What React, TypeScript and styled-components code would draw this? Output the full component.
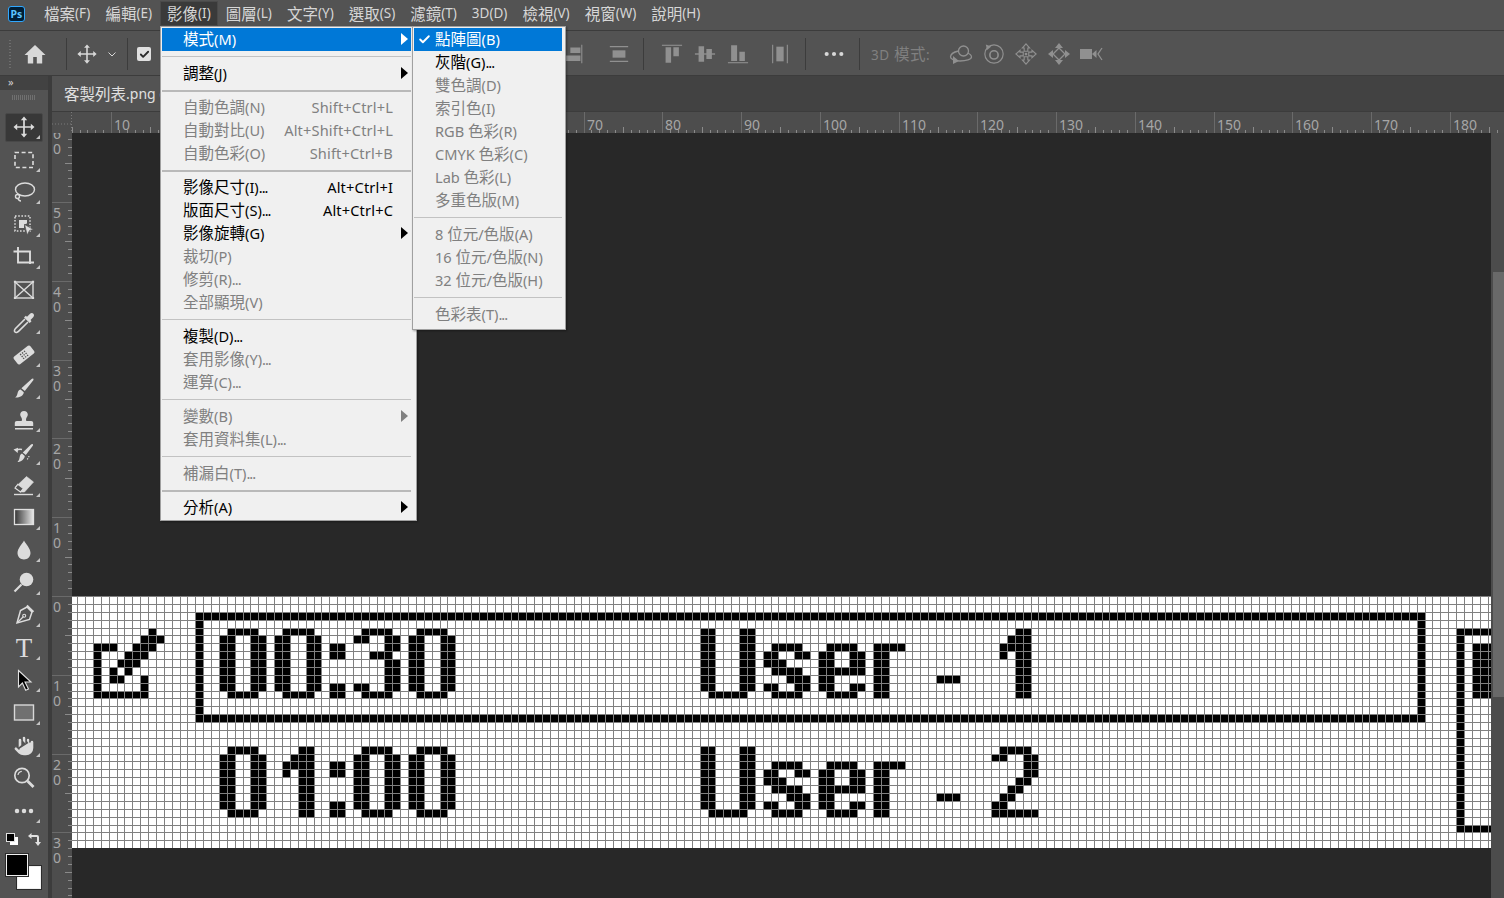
import React from 'react'
import styled, { createGlobalStyle } from 'styled-components'
import { Check, Hand } from 'lucide-react'

const GlobalStyle = createGlobalStyle`
  html, body {
    margin: 0;
    height: 100%;
    overflow: hidden;
    background: #535353;
  }
`

const Shell = styled.div`
  position: relative;
  display: flex;
  flex-direction: column;
  width: 1504px;
  height: 898px;
  overflow: hidden;
  background: #535353;
  font-family: 'Noto Sans', 'Noto Sans CJK TC', sans-serif;
  font-size: 14px;
  line-height: 1;
`

const Han = styled.span`
  font-family: 'Noto Sans CJK TC', sans-serif;
  font-size: 15.5px;
`

const Dots = styled.span`
  letter-spacing: -1px;
`

const Label: React.FC<{ text: string }> = ({ text }) => (
  <>
    {text.split(/([\u3400-\u9fff]+|\.\.\.)/).map((part, i) => {
      if (i % 2 === 0) return part
      return part === '...' ? <Dots key={i}>{part}</Dots> : <Han key={i}>{part}</Han>
    })}
  </>
)

/* ---------- menu bar ---------- */

const MenuBar = styled.div`
  flex: none;
  display: flex;
  align-items: center;
  height: 30px;
  padding-left: 8px;
  color: #d6d6d6;
  font-size: 13.5px;
`

const PsLogo = styled.div`
  flex: none;
  display: flex;
  align-items: center;
  justify-content: center;
  box-sizing: border-box;
  width: 17px;
  height: 16px;
  margin-right: 11.5px;
  margin-top: -2px;
  border: 1px solid #31a8ff;
  border-radius: 3px;
  background: #001e36;
  color: #5cc4ff;
  font-size: 10.5px;
  font-weight: 700;
`

const MenuTitle = styled.div<{ $active?: boolean }>`
  display: flex;
  align-items: center;
  height: 23px;
  margin-top: -3px;
  padding: 0 6.5px;
  border: 1px solid ${({ $active }) => ($active ? '#4a4a4a' : 'transparent')};
  background: ${({ $active }) => ($active ? '#3a3a3a' : 'transparent')};
  white-space: nowrap;
`

const MENU_TITLES = [
  '檔案(F)',
  '編輯(E)',
  '影像(I)',
  '圖層(L)',
  '文字(Y)',
  '選取(S)',
  '濾鏡(T)',
  '3D(D)',
  '檢視(V)',
  '視窗(W)',
  '說明(H)',
]

/* ---------- dropdown menus ---------- */

const Dropdown = styled.div<{ $left: number; $width: number; $pad: number; $padBottom: number }>`
  position: absolute;
  top: 26px;
  left: ${({ $left }) => $left}px;
  width: ${({ $width }) => $width}px;
  box-sizing: border-box;
  padding: 1px ${({ $pad }) => $pad}px ${({ $padBottom }) => $padBottom}px 1px;
  border: 1px solid #a0a0a0;
  background: #f0f0f0;
  box-shadow: 1px 1px 2px rgba(0, 0, 0, 0.35);
  z-index: 5;
`

const ItemRow = styled.div<{ $tone: 'on' | 'off' | 'hot' }>`
  display: grid;
  grid-template-columns: 21px 1fr auto 18px;
  align-items: center;
  box-sizing: border-box;
  height: 23px;
  padding-bottom: 1px;
  font-size: 14.6px;
  background: ${({ $tone }) => ($tone === 'hot' ? '#0078d7' : 'transparent')};
  color: ${({ $tone }) =>
    $tone === 'hot' ? '#fff' : $tone === 'on' ? '#000' : '#808080'};
  white-space: nowrap;
`

const CheckCell = styled.span`
  display: flex;
  justify-content: center;
`

const Shortcut = styled.span`
  font-size: 14.6px;
  letter-spacing: 0.15px;
`

const SubArrow = styled.span`
  justify-self: end;
  width: 0;
  height: 0;
  margin-right: 3px;
  border-left: 7px solid currentColor;
  border-top: 6px solid transparent;
  border-bottom: 6px solid transparent;
`

const Rule = styled.div<{ $thick?: boolean }>`
  height: ${({ $thick }) => ($thick ? 2 : 1)}px;
  margin: 5px 0 ${({ $thick }) => ($thick ? 4 : 5)}px;
  background: ${({ $thick }) => ($thick ? '#b9b9b9' : '#c2c2c2')};
`

type Entry =
  | { rule: true; thick?: boolean }
  | {
      rule?: false
      text: string
      key?: string
      tone: 'on' | 'off' | 'hot'
      arrow?: boolean
      checked?: boolean
    }

const IMAGE_MENU: Entry[] = [
  { text: '模式(M)', tone: 'hot', arrow: true },
  { rule: true },
  { text: '調整(J)', tone: 'on', arrow: true },
  { rule: true, thick: true },
  { text: '自動色調(N)', key: 'Shift+Ctrl+L', tone: 'off' },
  { text: '自動對比(U)', key: 'Alt+Shift+Ctrl+L', tone: 'off' },
  { text: '自動色彩(O)', key: 'Shift+Ctrl+B', tone: 'off' },
  { rule: true, thick: true },
  { text: '影像尺寸(I)...', key: 'Alt+Ctrl+I', tone: 'on' },
  { text: '版面尺寸(S)...', key: 'Alt+Ctrl+C', tone: 'on' },
  { text: '影像旋轉(G)', tone: 'on', arrow: true },
  { text: '裁切(P)', tone: 'off' },
  { text: '修剪(R)...', tone: 'off' },
  { text: '全部顯現(V)', tone: 'off' },
  { rule: true },
  { text: '複製(D)...', tone: 'on' },
  { text: '套用影像(Y)...', tone: 'off' },
  { text: '運算(C)...', tone: 'off' },
  { rule: true },
  { text: '變數(B)', tone: 'off', arrow: true },
  { text: '套用資料集(L)...', tone: 'off' },
  { rule: true },
  { text: '補漏白(T)...', tone: 'off' },
  { rule: true, thick: true },
  { text: '分析(A)', tone: 'on', arrow: true },
]

const MODE_MENU: Entry[] = [
  { text: '點陣圖(B)', tone: 'hot', checked: true },
  { text: '灰階(G)...', tone: 'on' },
  { text: '雙色調(D)', tone: 'off' },
  { text: '索引色(I)', tone: 'off' },
  { text: 'RGB 色彩(R)', tone: 'off' },
  { text: 'CMYK 色彩(C)', tone: 'off' },
  { text: 'Lab 色彩(L)', tone: 'off' },
  { text: '多重色版(M)', tone: 'off' },
  { rule: true },
  { text: '8 位元/色版(A)', tone: 'off' },
  { text: '16 位元/色版(N)', tone: 'off' },
  { text: '32 位元/色版(H)', tone: 'off' },
  { rule: true },
  { text: '色彩表(T)...', tone: 'off' },
]

const MenuList: React.FC<{ entries: Entry[] }> = ({ entries }) => (
  <>
    {entries.map((e, i) =>
      e.rule ? (
        <Rule key={i} $thick={e.thick} />
      ) : (
        <ItemRow key={i} $tone={e.tone}>
          <CheckCell>
            {e.checked && <Check size={13} strokeWidth={3.5} />}
          </CheckCell>
          <span>
            <Label text={e.text} />
          </span>
          <Shortcut>{e.key}</Shortcut>
          {e.arrow ? <SubArrow /> : <span />}
        </ItemRow>
      ),
    )}
  </>
)

/* ---------- icons ---------- */

const Ic: React.FC<{ size?: number; children: React.ReactNode }> = ({
  size = 24,
  children,
}) => (
  <svg
    width={size}
    height={size}
    viewBox="0 0 24 24"
    fill="none"
    stroke="currentColor"
    strokeWidth={1.5}
  >
    {children}
  </svg>
)

const MoveGlyph = () => (
  <>
    <path d="M12 4v16M4 12h16" strokeWidth={1.7} />
    <path
      d="M12 1.5l3.2 3.7H8.8zM12 22.5l3.2-3.7H8.8zM1.5 12l3.7-3.2v6.4zM22.5 12l-3.7-3.2v6.4z"
      fill="currentColor"
      stroke="none"
    />
  </>
)

// no flyout marker under the frame and zoom tools
const NO_MARKER = [5, 20]

const TOOL_ICONS: React.ReactNode[] = [
  <MoveGlyph />,
  <rect x="3" y="4.5" width="18" height="15" strokeDasharray="4 2.6" strokeWidth={1.6} />,
  <>
    <ellipse cx="13" cy="9.5" rx="9.5" ry="6.5" strokeWidth={1.4} />
    <circle cx="5.5" cy="16.5" r="2" strokeWidth={1.4} />
    <path d="M6 18.5c.5 1.5 2 2.5 3 2.5" strokeWidth={1.4} />
  </>,
  <>
    <rect x="3" y="3" width="15" height="15" strokeDasharray="1.6 1.6" strokeWidth={1.5} />
    <path d="M7 7h8v3.5l-3 1V15H7z" fill="currentColor" stroke="none" />
    <path d="M12.5 11.5l9 5-4 1-2.2 4.5z" fill="currentColor" stroke="#535353" strokeWidth={0.7} />
  </>,
  <>
    <path d="M1.5 6.5H18V19" strokeWidth={1.9} />
    <path d="M6 2v15.5h16" strokeWidth={1.9} />
  </>,
  <>
    <rect x="3" y="4" width="18" height="16" strokeWidth={1.4} />
    <path d="M3 4l18 16M21 4L3 20" strokeWidth={1.4} />
    <path d="M3 2.8v2M3 19v2M21 2.8v2M21 19v2" strokeWidth={2.2} />
  </>,
  <>
    <path d="M13 8L3.500 17.500c-1.300 1.400-1.300 2.800-.5 3.500.8.800 2.300.6 3.500-.6L16 11" strokeWidth={1.6} />
    <path d="M12 6.500l1.800-1.800 1.200 1 2.800-2.800c1.200-1.200 2.800-1 3.600-.2.800.8.900 2.400-.2 3.500l-2.700 2.700 1 1.300-1.800 1.800z" fill="currentColor" stroke="none" />
  </>,
  <g transform="rotate(-38 12 12)">
    <rect x="1.5" y="7.2" width="21" height="9.6" rx="1.8" fill="currentColor" stroke="none" />
    <path d="M9 9.5h1.3M11.5 9.5h1.3M14 9.5h1.3M9 12h1.3M11.5 12h1.3M14 12h1.3M9 14.5h1.3M11.5 14.5h1.3M14 14.5h1.3" stroke="#535353" strokeWidth={1.4} />
  </g>,
  <path d="M21 2.5c.6.3.7 1 .3 1.700L12.800 15l-3.400-2.800L19.600 3c.5-.5 1-.7 1.400-.5zM8.600 13.500l3.200 2.700c-.3 3.600-4.500 5.600-8.800 5.300 2.600-1.400 2.200-3.600 3-5.700.4-1.100 1.400-2 2.600-2.300z" fill="currentColor" stroke="none" />,
  <path d="M12 3c2.300 0 3.800 1.600 3.800 3.500 0 2.200-1.800 3-1.800 5 0 .5.100 1 .4 1.500h4.800c1.200 0 2 .8 2 2V18H2.800v-3c0-1.200.8-2 2-2h4.800c.3-.5.4-1 .4-1.500 0-2-1.800-2.800-1.800-5C8.200 4.600 9.700 3 12 3zM3 20h18v1.600H3z" fill="currentColor" stroke="none" />,
  <>
    <path d="M20.500 3c.6.300.7 1 .3 1.700L13.800 14l-3-2.500L19 3.500c.5-.5 1-.7 1.500-.5zM10 12.500l2.800 2.400c-.3 3.400-3.800 5.800-7.300 6.100 2-1.700 1.800-3.900 2.400-5.700.3-1.300 1-2.400 2.100-2.800z" fill="currentColor" stroke="none" />
    <path d="M10 8.500c-2-.5-4-.2-5.500 1" strokeWidth={1.4} />
    <path d="M1.500 8.500l4.500-1.800L5.700 12z" fill="currentColor" stroke="none" />
    <path d="M17 15c-.3 1.500-1.200 3-2.500 4" strokeWidth={1.2} strokeDasharray="1.3 1.3" />
  </>,
  <>
    <path d="M14.500 3.500l7 5.500-9 10-4-.1L3 14.500z" fill="currentColor" stroke="currentColor" strokeWidth={0.6} />
    <path d="M3 15l5.500 4 3-3.500-5.700-4.200z" fill="#535353" stroke="currentColor" strokeWidth={1.2} />
    <path d="M2 21.500h19" strokeWidth={1.4} />
  </>,
  <>
    <defs>
      <linearGradient id="toolGrad" x1="0" y1="0" x2="1" y2="0">
        <stop offset="0" stopColor="#333" />
        <stop offset="1" stopColor="#e8e8e8" />
      </linearGradient>
    </defs>
    <rect x="2.500" y="3.500" width="19" height="15" fill="url(#toolGrad)" stroke="#e0e0e0" strokeWidth={1.3} />
  </>,
  <path d="M12 2.500c1.800 3.600 6.500 7.800 6.500 12.500 0 3.700-2.900 6.500-6.500 6.500S5.500 18.700 5.500 15C5.500 10.300 10.200 6.100 12 2.500z" fill="currentColor" stroke="none" />,
  <>
    <circle cx="14.500" cy="8.500" r="6.800" fill="currentColor" stroke="none" />
    <path d="M9.500 13.500l-7 7" strokeWidth={2.2} />
  </>,
  <>
    <path d="M15 4l5 5-2.500 7.500L5 20l3.500-12.500z" strokeWidth={1.5} />
    <path d="M15.500 1.800l6.700 6.400-1.600 1.300-6.400-6.300z" fill="currentColor" stroke="none" />
    <path d="M5.500 19.500l6-6" strokeWidth={1.2} />
    <circle cx="12.200" cy="12.800" r="1.500" strokeWidth={1.1} />
  </>,
  null,
  <path d="M6.500 1.500l12.500 11.500h-6l3.500 7-2.800 1.300-3.300-7.300L6.500 18z" fill="#000" stroke="#e0e0e0" strokeWidth={1.1} />,
  <rect x="2.500" y="4" width="19" height="15" fill="#707070" stroke="#d8d8d8" strokeWidth={1.4} />,
  <Hand size={24} x={0} y={0} fill="currentColor" stroke="#535353" strokeWidth={1.4} />,
  <>
    <circle cx="10" cy="9.500" r="7.200" strokeWidth={1.7} />
    <path d="M15.500 15l6 6" strokeWidth={2.8} />
    <path d="M6 9c.3-2 1.800-3.400 3.800-3.600" strokeWidth={1.2} />
  </>,
  <path d="M5 12h.01M12 12h.01M19 12h.01" strokeWidth={4.5} strokeLinecap="round" />,
]

/* ---------- options bar ---------- */

const OptionsBar = styled.div`
  flex: none;
  display: flex;
  align-items: center;
  box-sizing: border-box;
  height: 46px;
  padding-top: 2px;
  border-top: 1px solid #3c3c3c;
  border-bottom: 1px solid #3c3c3c;
  color: #909090;
`

const Slot = styled.div<{ $w: number; $on?: boolean; $ml?: number }>`
  flex: none;
  display: flex;
  align-items: center;
  justify-content: center;
  width: ${({ $w }) => $w}px;
  margin-left: ${({ $ml }) => $ml ?? 0}px;
  color: ${({ $on }) => ($on ? '#d8d8d8' : 'inherit')};
`

const Divider = styled.div<{ $ml: number }>`
  flex: none;
  width: 1px;
  height: 32px;
  margin-left: ${({ $ml }) => $ml}px;
  background: #3c3c3c;
`

const Grip = styled.div`
  width: 2px;
  height: 28px;
  background: repeating-linear-gradient(
    to bottom,
    #6e6e6e 0 1px,
    transparent 1px 3px
  );
`

const ModeText = styled.span`
  flex: none;
  width: 62px;
  margin-left: 11px;
  font-size: 13.5px;
  color: #808080;
  letter-spacing: 0.6px;
  white-space: nowrap;
`

const Checkbox = styled.div`
  display: flex;
  align-items: center;
  justify-content: center;
  width: 14px;
  height: 14px;
  border-radius: 2px;
  background: #e0e0e0;
  color: #2a2a2a;
`

const Options: React.FC = () => (
  <OptionsBar>
    <Slot $w={20}>
      <Grip />
    </Slot>
    <Slot $w={30} $on>
      <Ic>
        <path d="M12 3L1.500 13h3.300v8.500h5.400V15h3.600v6.500h5.400V13h3.300z" fill="currentColor" stroke="none" />
      </Ic>
    </Slot>
    <Divider $ml={16} />
    <Slot $w={39} $on>
      <Ic size={22}>
        <MoveGlyph />
      </Ic>
    </Slot>
    <Slot $w={12} $on>
      <Ic size={12}>
        <path d="M5 9l7 7 7-7" strokeWidth={2} />
      </Ic>
    </Slot>
    <Divider $ml={9} />
    <Slot $w={32} $on>
      <Checkbox>
        <Check size={11} strokeWidth={4} />
      </Checkbox>
    </Slot>
    <Slot $w={22} $ml={403}>
      <Ic size={22}>
        <path d="M20.500 2v20" strokeWidth={1.2} />
        <path d="M8 5h11v6H8zM3 13.500h16v6H3z" fill="currentColor" stroke="none" />
      </Ic>
    </Slot>
    <Slot $w={24} $ml={22}>
      <Ic size={22}>
        <path d="M2 4h20M2 20h20" strokeWidth={1.2} />
        <path d="M5 8h14v8H5z" fill="currentColor" stroke="none" />
      </Ic>
    </Slot>
    <Divider $ml={12} />
    <Slot $w={22} $ml={17}>
      <Ic size={22}>
        <path d="M1 2.500h22" strokeWidth={1.2} />
        <path d="M5 4.500h6v17H5zM13.500 4.500h6v10h-6z" fill="currentColor" stroke="none" />
      </Ic>
    </Slot>
    <Slot $w={22} $ml={11}>
      <Ic size={22}>
        <path d="M1 12h22" strokeWidth={1.5} />
        <path d="M5 3.500h6v17H5zM13.500 6.500h6v11h-6z" fill="currentColor" stroke="none" />
      </Ic>
    </Slot>
    <Slot $w={22} $ml={11}>
      <Ic size={22}>
        <path d="M1 21.500h22" strokeWidth={1.2} />
        <path d="M4.500 2.500h6.500v17H4.500zM13.500 9.500h6v10h-6z" fill="currentColor" stroke="none" />
      </Ic>
    </Slot>
    <Slot $w={22} $ml={20}>
      <Ic size={22}>
        <path d="M4 2v20M20 2v20" strokeWidth={1.2} />
        <path d="M8 4h8v16H8z" fill="currentColor" stroke="none" />
      </Ic>
    </Slot>
    <Divider $ml={14} />
    <Slot $w={22} $ml={17} $on>
      <Ic size={22}>
        <path d="M4 12h.01M12 12h.01M20 12h.01" strokeWidth={4.5} strokeLinecap="round" />
      </Ic>
    </Slot>
    <Divider $ml={14} />
    <ModeText>
      <Label text="3D 模式:" />
    </ModeText>
    <Slot $w={24} $ml={16}>
      <Ic>
        <circle cx="14.500" cy="9" r="5" strokeWidth={1.3} />
        <path d="M9.500 9C5 10 1.500 12.500 1.500 15c0 2 4 4 9.500 4 6 0 11.500-1.500 11.500-4 0-1.500-1.500-3-4-4" strokeWidth={1.3} />
        <path d="M4 14l6 5-6 3z" fill="currentColor" stroke="none" />
      </Ic>
    </Slot>
    <Slot $w={22} $ml={10}>
      <Ic>
        <circle cx="12" cy="12" r="10" strokeWidth={1.3} />
        <circle cx="12" cy="13" r="4.500" strokeWidth={1.8} />
        <path d="M3 1.500l6 2.200-4.500 4z" fill="currentColor" stroke="none" />
      </Ic>
    </Slot>
    <Slot $w={22} $ml={10}>
      <Ic>
        <path d="M12 1l4 4.500h-2V9h-4V5.500H8zM12 23l4-4.500h-2V15h-4v3.500H8zM1 12l4.500-4v2H9v4H5.500v2zM23 12l-4.500-4v2H15v4h3.500v2z" strokeWidth={1.2} />
        <circle cx="12" cy="12" r="1.500" fill="currentColor" stroke="none" />
      </Ic>
    </Slot>
    <Slot $w={24} $ml={10}>
      <Ic>
        <path d="M12 1l4 5H8zM12 23l4-5H8zM1 12l5-4v8zM23 12l-5-4v8z" fill="currentColor" stroke="none" />
        <path d="M12 6l6 6-6 6-6-6z" strokeWidth={1.3} />
      </Ic>
    </Slot>
    <Slot $w={24} $ml={8}>
      <Ic>
        <path d="M1 7h12v10H1zM13 12l4.500-4v8z" fill="currentColor" stroke="none" />
        <path d="M23 6l-4 6 4 6" strokeWidth={1.3} />
      </Ic>
    </Slot>
  </OptionsBar>
)

/* ---------- tool panel ---------- */

const Main = styled.div`
  flex: 1;
  display: flex;
  min-height: 0;
`

const ToolPanel = styled.div`
  flex: none;
  display: flex;
  flex-direction: column;
  width: 48px;
  height: 100%;
  border-right: 4px solid #3c3c3c;
`

const PanelHeader = styled.div`
  flex: none;
  height: 14px;
  padding-left: 8px;
  background: #424242;
  color: #d0d0d0;
  font-size: 11px;
  line-height: 12px;
`

const PanelGrip = styled.div`
  flex: none;
  height: 5px;
  margin: 5px 12px 11px;
  background: repeating-linear-gradient(
    to right,
    #707070 0 1px,
    transparent 1px 2px
  );
`

const ToolRow = styled.div`
  flex: none;
  height: 32.55px;
  padding: 1.5px 5px;
  box-sizing: border-box;
`

const ToolFace = styled.div<{ $active?: boolean; $marker: boolean }>`
  position: relative;
  display: flex;
  align-items: center;
  justify-content: center;
  height: 100%;
  box-sizing: border-box;
  border: 1px solid ${({ $active }) => ($active ? '#484848' : 'transparent')};
  border-radius: 2px;
  background: ${({ $active }) => ($active ? '#383838' : 'transparent')};
  color: #dcdcdc;

  &::after {
    content: '';
    display: ${({ $marker }) => ($marker ? 'block' : 'none')};
    position: absolute;
    right: 2px;
    bottom: 2px;
    width: 0;
    height: 0;
    border-left: 4px solid transparent;
    border-bottom: 4px solid #c4c4c4;
  }
`

const TypeGlyph = styled.span`
  font-family: 'Liberation Serif', serif;
  font-size: 27px;
  color: #dcdcdc;
`

const MiniSwatches = styled.div`
  flex: none;
  display: flex;
  align-items: center;
  justify-content: space-between;
  padding: 5px 7px 0 6px;
  height: 14px;
  color: #e0e0e0;
`

const SwatchStack = styled.div`
  position: relative;
  flex: none;
  width: 36px;
  height: 34px;
  margin: 8px 0 0 6px;
`

const ColorChip = styled.div<{ $fg?: boolean }>`
  position: absolute;
  left: ${({ $fg }) => ($fg ? 0 : 11)}px;
  top: ${({ $fg }) => ($fg ? 0 : 12)}px;
  width: ${({ $fg }) => ($fg ? 22 : 24)}px;
  height: ${({ $fg }) => ($fg ? 22 : 23)}px;
  box-sizing: border-box;
  border: 1px solid #f0f0f0;
  outline: 1px solid #2c2c2c;
  background: ${({ $fg }) => ($fg ? '#000' : '#fff')};
  z-index: ${({ $fg }) => ($fg ? 1 : 0)};
`

const Tools: React.FC = () => (
  <ToolPanel>
    <PanelHeader>»</PanelHeader>
    <PanelGrip />
    {TOOL_ICONS.map((icon, i) => (
      <ToolRow key={i}>
        <ToolFace $active={i === 0} $marker={!NO_MARKER.includes(i)}>
          {icon ? <Ic>{icon}</Ic> : <TypeGlyph>T</TypeGlyph>}
        </ToolFace>
      </ToolRow>
    ))}
    <MiniSwatches>
      <svg width="12" height="12" viewBox="0 0 12 12">
        <rect x="4" y="4" width="8" height="8" fill="#fff" />
        <rect x="0.5" y="0.5" width="8" height="8" fill="#000" stroke="#e0e0e0" />
      </svg>
      <svg width="13" height="13" viewBox="0 0 13 13" fill="currentColor">
        <path d="M0 3l3.500-3v2H9a2 2 0 0 1 2 2v5h2l-3 4-3-4h2V4H3.500v2z" />
      </svg>
    </MiniSwatches>
    <SwatchStack>
      <ColorChip $fg />
      <ColorChip />
    </SwatchStack>
  </ToolPanel>
)

/* ---------- document area ---------- */

const Workspace = styled.div`
  flex: 1;
  display: flex;
  flex-direction: column;
  min-width: 0;
`

const TabStrip = styled.div`
  flex: none;
  display: flex;
  height: 35px;
  background: #424242;
`

const DocTab = styled.div`
  display: flex;
  align-items: center;
  width: 340px;
  padding-left: 12px;
  box-sizing: border-box;
  background: #535353;
  color: #e0e0e0;
  white-space: nowrap;
`

const RulerTop = styled.svg`
  flex: none;
  display: block;
  width: 1452px;
  height: 22px;
  background: #4d4d4d;
  border-top: 1px solid #3c3c3c;
  box-sizing: border-box;
`

const RulerLabel = styled.text`
  font-family: 'Noto Sans', sans-serif;
  font-size: 14px;
  fill: #a6a6a6;
`

const DocBody = styled.div`
  flex: 1;
  display: flex;
  min-height: 0;
`

const RulerSide = styled.svg`
  flex: none;
  display: block;
  width: 20px;
  height: 765px;
  background: #4d4d4d;
`

const CanvasArea = styled.div`
  flex: 1;
  min-width: 0;
  padding-top: 463px;
  background: #282828;
`

const PixelSheet = styled.svg`
  display: block;
  width: 1419px;
  height: 252px;
  background: #fff;
`

const ScrollTrack = styled.div`
  flex: none;
  width: 13px;
  padding-left: 2px;
  box-sizing: border-box;
  background: #4c4c4c;
  padding-top: 139px;
`

const ScrollThumb = styled.div`
  height: 425px;
  background: #696969;
`

const TopRuler: React.FC = () => {
  const marks: React.ReactNode[] = []
  for (let n = 5; n <= 186; n++) {
    const x = Math.round(-19.75 + 7.875 * n)
    if (x < 20) continue
    const h = n % 10 === 0 ? 21 : n % 5 === 0 ? 6 : 3
    marks.push(<rect key={n} x={x} y={21 - h} width={1} height={h} fill={n % 10 === 0 ? '#6a6a6a' : '#8a8a8a'} />)
    // labels from 20 to 60 sit under the open menus
    if (n % 10 === 0 && n <= 180 && (n < 20 || n > 60)) {
      marks.push(
        <RulerLabel key={`t${n}`} x={x + 3} y={18}>
          {n}
        </RulerLabel>,
      )
    }
  }
  return (
    <RulerTop>
      <path d="M19.500 0v21M0 12h20" stroke="#7a7a7a" strokeDasharray="1 2" />
      {marks}
    </RulerTop>
  )
}

const SideRuler: React.FC = () => {
  const marks: React.ReactNode[] = []
  for (let n = -60; n <= 40; n++) {
    const y = 463 + 7.88 * n
    if (y < 0 || y > 765) continue
    const w = n % 10 === 0 ? 20 : n % 5 === 0 ? 7 : 4
    marks.push(<rect key={n} x={20 - w} y={Math.round(y)} width={w} height={1} fill={n % 10 === 0 ? '#6a6a6a' : '#8a8a8a'} />)
  }
  for (let v = -60; v <= 30; v += 10) {
    const y = 463 + 7.88 * v
    const digits = String(Math.abs(v)).split('')
    digits.forEach((d, i) => {
      marks.push(
        <RulerLabel key={`${v}-${i}`} x={1} y={Math.round(y) + 16 + i * 15}>
          {d}
        </RulerLabel>,
      )
    })
  }
  return <RulerSide viewBox="0 0 20 765">{marks}</RulerSide>
}

/* ---------- the pixel image on the canvas ---------- */

const GLYPHS: Record<string, string[]> = {
  '0': ['.####.', '##..##', '##..##', '##..##', '##..##', '##..##', '##..##', '##..##', '.####.'],
  '1': ['..##', '.###', '####', '#.##', '..##', '..##', '..##', '..##', '..##'],
  '2': ['.####.', '##..##', '....##', '....##', '...##.', '..##..', '.##...', '##....', '######'],
  '3': ['.####.', '##..##', '....##', '..###.', '....##', '....##', '....##', '##..##', '.####.'],
  ':': ['..', '..', '##', '##', '..', '..', '..', '##', '##'],
  '-': ['...', '...', '...', '...', '...', '...', '###', '...', '...'],
  U: ['##...##', '##...##', '##...##', '##...##', '##...##', '##...##', '##...##', '##...##', '.#####.'],
  s: ['......', '......', '.####.', '##..##', '###...', '.####.', '...###', '##..##', '.####.'],
  e: ['......', '......', '.####.', '##..##', '##..##', '######', '##....', '##..##', '.####.'],
  r: ['....', '....', '####', '##..', '##..', '##..', '##..', '##..', '##..'],
  tick: [
    '.......#.',
    '......###',
    '###..###.',
    '#...###..',
    '#..###...',
    '#.#.#....',
    '#.##..#..',
    '#.....#..',
    '#######..',
  ],
}

// [glyph, column, row]
const STAMPS: [string, number, number][] = [
  ['tick', 2, 4],
  ['0', 18, 4], ['0', 25, 4], [':', 32, 4], ['3', 35, 4], ['0', 42, 4],
  ['U', 79, 4], ['s', 87, 4], ['e', 94, 4], ['r', 101, 4], ['-', 109, 4], ['1', 117, 4],
  ['0', 18, 19], ['1', 26, 19], [':', 32, 19], ['0', 35, 19], ['0', 42, 19],
  ['U', 79, 19], ['s', 87, 19], ['e', 94, 19], ['r', 101, 19], ['-', 109, 19], ['2', 116, 19],
]

// [first column, last column, first row, last row]
const BLOCKS: [number, number, number, number][] = [
  [15, 170, 2, 2],
  [15, 170, 15, 15],
  [15, 15, 2, 15],
  [170, 170, 2, 15],
  [175, 181, 4, 4],
  [175, 181, 29, 29],
  [175, 175, 4, 29],
  [177, 181, 6, 12],
]

const colX = (c: number) => Math.round(5.1 + 7.88 * c)
const rowY = (r: number) => Math.round(7.88 * r)

const PixelImage: React.FC = () => {
  const ink: React.ReactNode[] = []
  STAMPS.forEach(([name, col, row], s) => {
    GLYPHS[name].forEach((line, dy) => {
      line.split('').forEach((cell, dx) => {
        if (cell !== '#') return
        const x = colX(col + dx)
        const y = rowY(row + dy)
        ink.push(
          <rect
            key={`${s}-${dx}-${dy}`}
            x={x}
            y={y}
            width={colX(col + dx + 1) - x}
            height={rowY(row + dy + 1) - y}
          />,
        )
      })
    })
  })
  BLOCKS.forEach(([c0, c1, r0, r1], b) => {
    const x = colX(c0)
    const y = rowY(r0)
    ink.push(
      <rect key={`b${b}`} x={x} y={y} width={colX(c1 + 1) - x} height={rowY(r1 + 1) - y} />,
    )
  })

  const lines: React.ReactNode[] = []
  for (let c = 0; c <= 181; c++) {
    lines.push(<rect key={`v${c}`} x={colX(c)} y={0} width={1} height={252} />)
  }
  for (let r = 0; r <= 32; r++) {
    lines.push(<rect key={`h${r}`} x={0} y={rowY(r)} width={1419} height={1} />)
  }

  return (
    <PixelSheet viewBox="0 0 1419 252" shapeRendering="crispEdges" role="img" aria-label="00:30 User - 1, 01:00 User - 2">
      <g fill="#000">{ink}</g>
      <g fill="#808080">{lines}</g>
    </PixelSheet>
  )
}

export default function App() {
  return (
    <Shell>
      <GlobalStyle />
      <MenuBar>
        <PsLogo>Ps</PsLogo>
        {MENU_TITLES.map((t) => (
          <MenuTitle key={t} $active={t === '影像(I)'}>
            <Label text={t} />
          </MenuTitle>
        ))}
      </MenuBar>
      <Options />
      <Main>
        <Tools />
        <Workspace>
          <TabStrip>
            <DocTab>
              <Label text="客製列表.png @" />
            </DocTab>
          </TabStrip>
          <TopRuler />
          <DocBody>
            <SideRuler />
            <CanvasArea>
              <PixelImage />
            </CanvasArea>
            <ScrollTrack>
              <ScrollThumb />
            </ScrollTrack>
          </DocBody>
        </Workspace>
      </Main>
      <Dropdown $left={160} $width={257} $pad={5} $padBottom={1}>
        <MenuList entries={IMAGE_MENU} />
      </Dropdown>
      <Dropdown $left={412} $width={154} $pad={3} $padBottom={3}>
        <MenuList entries={MODE_MENU} />
      </Dropdown>
    </Shell>
  )
}
